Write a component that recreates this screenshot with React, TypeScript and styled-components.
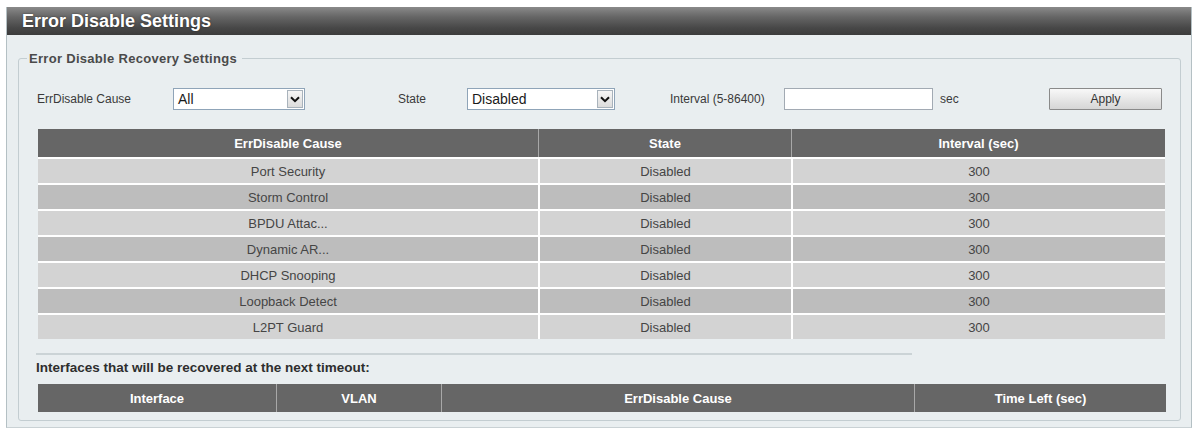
import React from 'react';
import styled, {createGlobalStyle} from 'styled-components';

type Recovery = {
    cause: string;
    state: string;
    interval: number;
};

const recoveries: Recovery[] = [
    {cause: 'Port Security', state: 'Disabled', interval: 300},
    {cause: 'Storm Control', state: 'Disabled', interval: 300},
    {cause: 'BPDU Attac...', state: 'Disabled', interval: 300},
    {cause: 'Dynamic AR...', state: 'Disabled', interval: 300},
    {cause: 'DHCP Snooping', state: 'Disabled', interval: 300},
    {cause: 'Loopback Detect', state: 'Disabled', interval: 300},
    {cause: 'L2PT Guard', state: 'Disabled', interval: 300},
];

const GlobalStyle = createGlobalStyle`
    html, body {
        margin: 0;
        padding: 0;
        background: #ffffff;
        font-family: "Liberation Sans", Arial, sans-serif;
    }
`;

const Page = styled.div`
    padding: 7px 3px 0 6px;
`;

const Panel = styled.section`
    width: 1186px;
    height: 421px;
    box-sizing: border-box;
    background: #e9eef0;
    border-left: 1px solid #b4c0c4;
    border-right: 1px solid #b4c0c4;
    border-bottom: 1px solid #c9d1d4;
    display: flex;
    flex-direction: column;
`;

const TitleBar = styled.h1`
    margin: 0;
    height: 28px;
    padding-left: 15px;
    display: flex;
    align-items: center;
    font-size: 18px;
    font-weight: bold;
    color: #ffffff;
    text-shadow: 0 0 2px rgba(0, 0, 0, 0.5);
    background: linear-gradient(to bottom, #8a8a8a 0%, #666666 35%, #474747 75%, #3c3c3c 100%);
`;

const Fieldset = styled.fieldset`
    margin: 16px 10px 0 11px;
    padding: 0 16px 8px 19px;
    border: 1px solid #c3cdd1;
    border-radius: 3px;
    min-width: 0;
`;

const Legend = styled.legend`
    margin-left: -11px;
    padding: 0 5px 0 2px;
    font-size: 13px;
    font-weight: bold;
    color: #4a4a4a;
    letter-spacing: 0.3px;
`;

const FormRow = styled.div`
    display: flex;
    align-items: center;
    height: 22px;
    margin-top: 22px;
`;

const Label = styled.span<{$width: number; $offset?: number}>`
    width: ${p => p.$width}px;
    margin-left: ${p => p.$offset ?? 0}px;
    flex: none;
    font-size: 12px;
    color: #3a3a3a;
    white-space: nowrap;
`;

const SelectBox = styled.div<{$width: number}>`
    width: ${p => p.$width}px;
    height: 22px;
    box-sizing: border-box;
    flex: none;
    display: flex;
    align-items: center;
    background: #ffffff;
    border: 1px solid #8fa4b8;
`;

const SelectValue = styled.span`
    flex: 1;
    padding-left: 4px;
    font-size: 14px;
    color: #1a1a1a;
`;

const SelectArrow = styled.span`
    width: 16px;
    height: 18px;
    margin-right: 1px;
    box-sizing: border-box;
    display: flex;
    align-items: center;
    justify-content: center;
    background: linear-gradient(#f6f6f6, #dcdcdc);
    border: 1px solid #a9b3bc;
`;

const TextInput = styled.div<{$width: number}>`
    width: ${p => p.$width}px;
    height: 22px;
    box-sizing: border-box;
    flex: none;
    background: #ffffff;
    border: 1px solid #a2aab3;
`;

const Unit = styled.span`
    width: 109px;
    margin-left: 7px;
    flex: none;
    font-size: 12px;
    color: #3a3a3a;
`;

const Button = styled.button`
    width: 113px;
    height: 22px;
    flex: none;
    padding: 0;
    font-family: inherit;
    font-size: 12px;
    color: #333333;
    background: linear-gradient(#f8f8f8, #d6d6d6);
    border: 1px solid #8a8a8a;
    border-radius: 1px;
`;

const Table = styled.table`
    width: 1125px;
    border-collapse: separate;
    border-spacing: 0;
    table-layout: fixed;
`;

const StatusTable = styled(Table)`
    margin-top: 19px;
`;

const HeadCell = styled.th<{$width: number}>`
    width: ${p => p.$width}px;
    height: 28px;
    padding: 0;
    font-size: 13px;
    font-weight: bold;
    color: #ffffff;
    background: #666666;
    text-align: center;
    & + & {
        border-left: 1px solid #a8a8a8;
    }
`;

const Row = styled.tr<{$dark: boolean}>`
    background: ${p => (p.$dark ? '#bdbdbd' : '#d3d3d3')};
`;

const Cell = styled.td`
    height: 24px;
    padding: 0;
    font-size: 13px;
    color: #454545;
    text-align: center;
    border-top: 2px solid #ffffff;
    & + & {
        border-left: 2px solid #ffffff;
    }
`;

const Divider = styled.hr`
    width: 876px;
    margin: 14px 0 0 -2px;
    height: 2px;
    border: none;
    background: #cbd3d6;
`;

const Caption = styled.div`
    margin: 5px 0 0 -2px;
    height: 16px;
    font-size: 13.5px;
    font-weight: bold;
    color: #2e2e2e;
`;

const PendingTable = styled(Table)`
    margin-top: 8px;
`;

const Chevron = () => (
    <svg width='10' height='7' viewBox='0 0 10 7'>
        <path d='M1 1.2 L5 5.2 L9 1.2' fill='none' stroke='#111' strokeWidth='2'/>
    </svg>
);

const Select = ({width, value}: {width: number; value: string}) => (
    <SelectBox $width={width}>
        <SelectValue>{value}</SelectValue>
        <SelectArrow><Chevron/></SelectArrow>
    </SelectBox>
);

const App = () => (
    <Page>
        <GlobalStyle/>
        <Panel>
            <TitleBar>Error Disable Settings</TitleBar>
            <Fieldset>
                <Legend>Error Disable Recovery Settings</Legend>
                <FormRow>
                    <Label $width={136} $offset={-1}>ErrDisable Cause</Label>
                    <Select width={132} value='All'/>
                    <Label $width={69} $offset={93}>State</Label>
                    <Select width={148} value='Disabled'/>
                    <Label $width={114} $offset={55}>Interval (5-86400)</Label>
                    <TextInput $width={149}/>
                    <Unit>sec</Unit>
                    <Button>Apply</Button>
                </FormRow>

                <StatusTable>
                    <thead>
                        <tr>
                            <HeadCell $width={500}>ErrDisable Cause</HeadCell>
                            <HeadCell $width={252}>State</HeadCell>
                            <HeadCell $width={373}>Interval (sec)</HeadCell>
                        </tr>
                    </thead>
                    <tbody>
                        {recoveries.map((r, i) => (
                            <Row key={r.cause} $dark={i % 2 === 1}>
                                <Cell>{r.cause}</Cell>
                                <Cell>{r.state}</Cell>
                                <Cell>{r.interval}</Cell>
                            </Row>
                        ))}
                    </tbody>
                </StatusTable>

                <Divider/>
                <Caption>Interfaces that will be recovered at the next timeout:</Caption>

                <PendingTable>
                    <thead>
                        <tr>
                            <HeadCell $width={238}>Interface</HeadCell>
                            <HeadCell $width={164}>VLAN</HeadCell>
                            <HeadCell $width={472}>ErrDisable Cause</HeadCell>
                            <HeadCell $width={251}>Time Left (sec)</HeadCell>
                        </tr>
                    </thead>
                </PendingTable>
            </Fieldset>
        </Panel>
    </Page>
);

export default App;
